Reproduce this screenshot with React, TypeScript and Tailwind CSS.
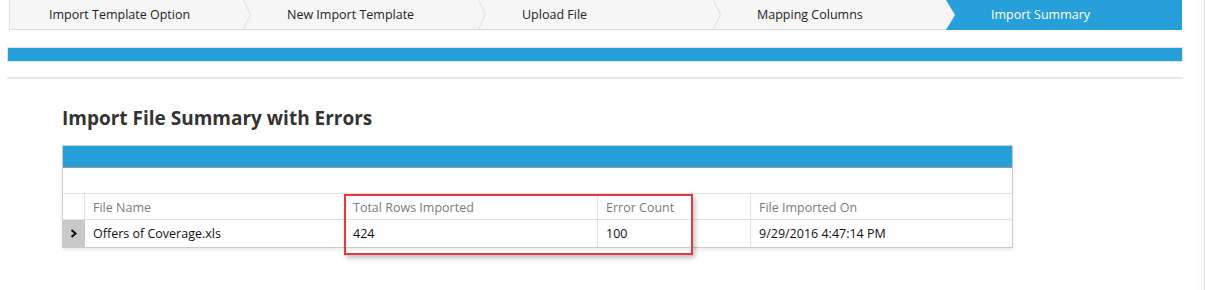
import React from 'react';

const steps = [
    { label: 'Import Template Option', width: 'w-[233px]' },
    { label: 'New Import Template', width: 'w-[235px]' },
    { label: 'Upload File', width: 'w-[235px]' },
    { label: 'Mapping Columns', width: 'w-[233px]' },
    { label: 'Import Summary', width: 'flex-1' },
];

const columns = [
    { label: 'File Name', width: 'w-[260px]', value: 'Offers of Coverage.xls' },
    { label: 'Total Rows Imported', width: 'w-[253px]', value: '424' },
    { label: 'Error Count', width: 'w-[153px]', value: '100' },
    { label: 'File Imported On', width: 'flex-1', value: '9/29/2016 4:47:14 PM' },
];

const Chevron: React.FC = () => (
    <svg width="9" height="29" viewBox="0 0 9 29" className="shrink-0">
        <path d="M0.5 0 L7.5 14.5 L0.5 29" fill="none" stroke="#dcdcdc" strokeWidth="1" />
    </svg>
);

const Stepper: React.FC = () => (
    <div className="ml-[9px] mr-[17px] flex h-[30px] bg-[#f6f6f6] border-l border-b border-[#dedede]">
        {steps.map((step, i) => {
            const last = i === steps.length - 1;
            if (last) {
                return (
                    <div
                        key={step.label}
                        className={`${step.width} flex items-center bg-[#27a0da] text-white pl-[45px] pt-px [clip-path:polygon(0_0,100%_0,100%_100%,0_100%,9px_50%)] -mb-px`}
                    >
                        {step.label}
                    </div>
                );
            }
            return (
                <div key={step.label} className={`${step.width} shrink-0 flex items-center text-[#222]`}>
                    {i > 0 && <Chevron />}
                    <span className={`pt-px ${i === 0 ? 'pl-[39px]' : 'pl-[35px]'}`}>{step.label}</span>
                </div>
            );
        })}
    </div>
);

const SummaryTable: React.FC = () => (
    <div className="relative w-[951px] border border-[#cccccc] shadow-[0_2px_3px_rgba(0,0,0,0.08)]">
        <div className="h-[22px] bg-[#27a0da] border-b border-[#9a9a9a]" />
        <div className="h-[26px] border-b border-[#e2e2e2]" />
        <div className="flex h-[26px] border-b border-[#e2e2e2] text-[#7b7b7b]">
            <div className="w-[22px] border-r border-[#e2e2e2]" />
            {columns.map((c, i) => (
                <div
                    key={c.label}
                    className={`${c.width} flex items-center pl-[8px] pt-[3px] ${i < columns.length - 1 ? 'border-r border-[#e2e2e2]' : ''}`}
                >
                    {c.label}
                </div>
            ))}
        </div>
        <div className="flex h-[27px] text-[#111]">
            <div className="w-[22px] bg-[#c9c9c9] flex items-center justify-center">
                <svg width="8" height="9" viewBox="0 0 8 9">
                    <path d="M1.5 1 L5.5 4.5 L1.5 8" fill="none" stroke="#111" strokeWidth="2" />
                </svg>
            </div>
            {columns.map((c, i) => (
                <div
                    key={c.label}
                    className={`${c.width} flex items-center pl-[8px] pt-[2px] ${i < columns.length - 1 ? 'border-r border-[#e2e2e2]' : ''}`}
                >
                    {c.value}
                </div>
            ))}
        </div>

        {/* highlight box drawn over the two count columns */}
        <div className="absolute left-[281px] top-[48px] w-[349px] h-[61px] border-2 border-[#e9373c] shadow-[2px_3px_5px_rgba(0,0,0,0.25)] pointer-events-none" />
    </div>
);

const App: React.FC = () => {
    return (
        <div className="w-[1205px] h-[290px] bg-white flex text-[12.5px] font-['Open_Sans',sans-serif] overflow-hidden">
            <div className="flex-1">
                <Stepper />

                <div className="mt-[17px] ml-[7px] mr-[16px] h-[15px] bg-[#27a0da] border border-[#d4e6f1]" />
                <div className="mt-[15px] ml-[7px] mr-[16px] h-[2px] bg-[#e6e6e6]" />

                <div className="pl-[62px] pt-[27px]">
                    <h2 className="text-[19px] font-bold text-[#333] leading-[24px] mb-[15px]">
                        Import File Summary with Errors
                    </h2>
                    <SummaryTable />
                </div>
            </div>
            <div className="w-[6px] bg-[#fafafa] border-r border-[#e4e4e4]" />
        </div>
    );
};

export default App;
